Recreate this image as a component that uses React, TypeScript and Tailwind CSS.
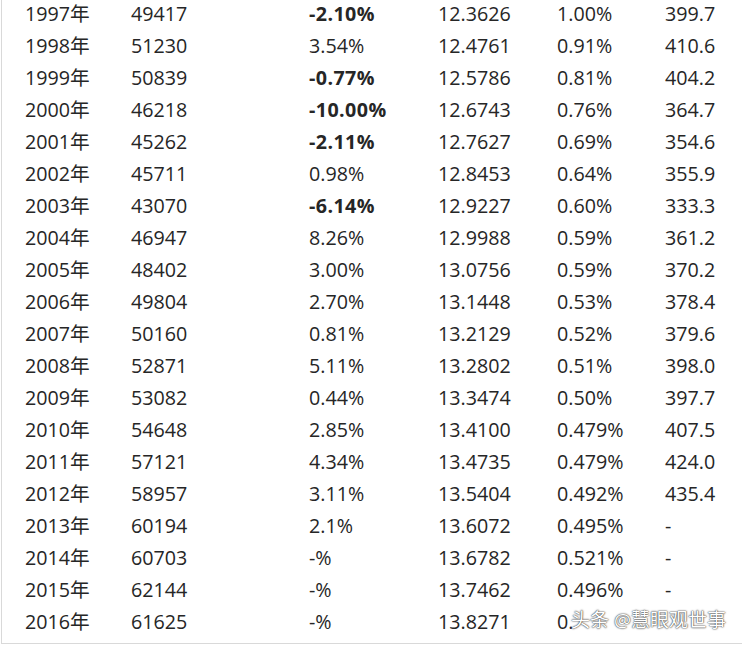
const rows: [string, string, string, boolean, string, string, string][] = [
  ["1997年", "49417", "-2.10%", true, "12.3626", "1.00%", "399.7"],
  ["1998年", "51230", "3.54%", false, "12.4761", "0.91%", "410.6"],
  ["1999年", "50839", "-0.77%", true, "12.5786", "0.81%", "404.2"],
  ["2000年", "46218", "-10.00%", true, "12.6743", "0.76%", "364.7"],
  ["2001年", "45262", "-2.11%", true, "12.7627", "0.69%", "354.6"],
  ["2002年", "45711", "0.98%", false, "12.8453", "0.64%", "355.9"],
  ["2003年", "43070", "-6.14%", true, "12.9227", "0.60%", "333.3"],
  ["2004年", "46947", "8.26%", false, "12.9988", "0.59%", "361.2"],
  ["2005年", "48402", "3.00%", false, "13.0756", "0.59%", "370.2"],
  ["2006年", "49804", "2.70%", false, "13.1448", "0.53%", "378.4"],
  ["2007年", "50160", "0.81%", false, "13.2129", "0.52%", "379.6"],
  ["2008年", "52871", "5.11%", false, "13.2802", "0.51%", "398.0"],
  ["2009年", "53082", "0.44%", false, "13.3474", "0.50%", "397.7"],
  ["2010年", "54648", "2.85%", false, "13.4100", "0.479%", "407.5"],
  ["2011年", "57121", "4.34%", false, "13.4735", "0.479%", "424.0"],
  ["2012年", "58957", "3.11%", false, "13.5404", "0.492%", "435.4"],
  ["2013年", "60194", "2.1%", false, "13.6072", "0.495%", "-"],
  ["2014年", "60703", "-%", false, "13.6782", "0.521%", "-"],
  ["2015年", "62144", "-%", false, "13.7462", "0.496%", "-"],
  ["2016年", "61625", "-%", false, "13.8271", "0.", ""],
];

export default function App() {
  return (
    <div className="w-[742px] h-[646px] bg-white overflow-hidden">
      <div
        className="relative ml-px w-[741px] h-[644px] border-l border-b border-[#d9d9d9] text-[19.7px] text-[#262626] overflow-hidden"
        style={{ fontFamily: '"Open Sans", "Noto Sans CJK SC", sans-serif' }}
      >
        <div className="-mt-[2px]">
          {rows.map(r => (
            <div key={r[0]} className="flex items-center h-[32px] leading-none">
              <div className="w-[129px] pl-[23px]">{r[0]}</div>
              <div className="w-[178px]">{r[1]}</div>
              <div className={`w-[129px] ${r[3] ? "font-bold tracking-[0.4px]" : ""}`}>{r[2]}</div>
              <div className="w-[119px]">{r[4]}</div>
              <div className="w-[108px]">{r[5]}</div>
              <div className="flex-1">{r[6]}</div>
            </div>
          ))}
        </div>
        {/* watermark */}
        <div
          className="absolute left-[569px] top-[611px] text-[19px] leading-none text-white"
          style={{ textShadow: "0 0 2px #333, 0 0 1px #333" }}
        >
          头条 @慧眼观世事
        </div>
      </div>
    </div>
  );
}
